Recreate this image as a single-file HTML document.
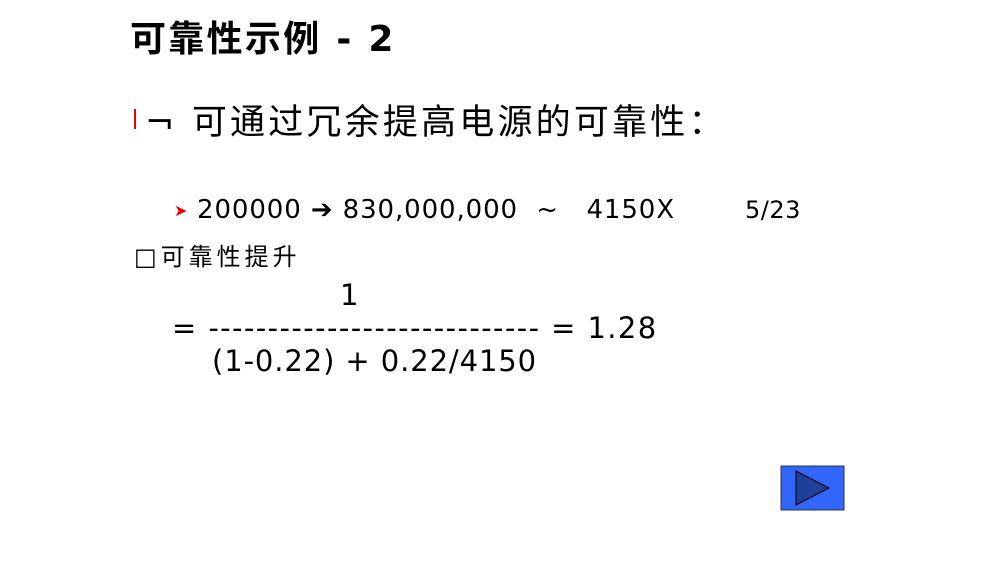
<!DOCTYPE html>
<html><head><meta charset="utf-8"><style>
body{margin:0;width:1006px;height:567px;background:#fff;position:relative;overflow:hidden;font-family:"DejaVu Sans","Noto Sans CJK SC",sans-serif;color:#000}
.a{position:absolute;white-space:nowrap;line-height:1}
</style></head><body>
<div class="a" style="left:130px;top:22px;font-size:36px;font-weight:bold;letter-spacing:2.3px">可靠性示例 - 2</div>
<div class="a" style="left:134px;top:109px;width:2px;height:20px;background:#e00"></div>
<div class="a" style="left:145px;top:106px;font-size:35px;letter-spacing:3.2px">¬ 可通过冗余提高电源的可靠性：</div>
<div class="a" style="left:174px;top:203px;font-size:16px;color:#e00">➤</div>
<div class="a" style="left:197px;top:197px;font-size:26px;letter-spacing:0.9px">200000 ➔ 830,000,000 &nbsp;~ &nbsp; 4150X</div>
<div class="a" style="left:745px;top:198px;font-size:24px;letter-spacing:0.5px">5/23</div>
<div class="a" style="left:134px;top:245px;font-size:24px;letter-spacing:4px">□可靠性提升</div>
<div class="a" style="left:340px;top:281px;font-size:29px">1</div>
<div class="a" style="left:172px;top:314px;font-size:29px;letter-spacing:1.4px">= ---------------------------- = 1.28</div>
<div class="a" style="left:212px;top:347px;font-size:29px;letter-spacing:0.9px">(1-0.22) + 0.22/4150</div>
<svg class="a" style="left:780px;top:465px" width="66" height="47">
<rect x="1" y="1" width="63" height="44" fill="#3366ff" stroke="#333" stroke-width="1"/>
<polygon points="16,6 49,23 16,40" fill="#1f3f99" stroke="#000" stroke-width="1"/>
</svg>
</body></html>
